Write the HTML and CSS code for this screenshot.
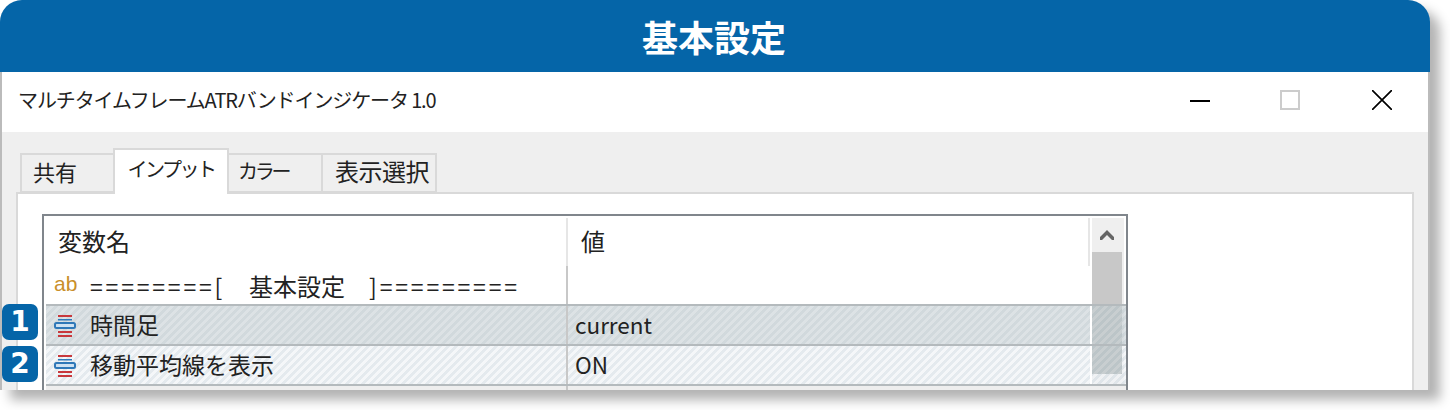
FILE: index.html
```html
<!DOCTYPE html>
<html lang="ja">
<head>
<meta charset="utf-8">
<title>基本設定</title>
<link rel="stylesheet" href="styles.css">
</head>
<body>
<div class="card">
  <header class="banner">基本設定</header>
  <div class="titlebar">
    <span class="wintitle">マルチタイムフレームATRバンドインジケータ 1.0</span>
    <div class="winbtns">
      <svg class="winbtn minbtn" viewBox="0 0 20 20"><path d="M0 11h20" stroke="#000" stroke-width="2" fill="none"/></svg>
      <svg class="winbtn" viewBox="0 0 20 20"><rect x="1" y="1" width="18" height="18" stroke="#ccc" stroke-width="2" fill="none"/></svg>
      <svg class="winbtn" viewBox="0 0 20 20"><path d="M0 0L20 20M20 0L0 20" stroke="#000" stroke-width="1.7" fill="none"/></svg>
    </div>
  </div>
  <div class="body">
    <div class="tabs">
      <div class="tab t1">共有</div>
      <div class="tab active">インプット</div>
      <div class="tab t3">カラー</div>
      <div class="tab t4">表示選択</div>
    </div>
    <div class="panel">
      <div class="table">
        <div class="row head"><div class="c1">変数名</div><div class="c2">値</div></div>
        <div class="row plain"><div class="c1"><span class="ab">ab</span><span class="eq">========[<span class="jp">　基本設定　</span>]=========</span></div><div class="c2"></div></div>
        <div class="row sel dark"><div class="c1"><svg class="ic" viewBox="0 0 22 24"><use href="#enumic"/></svg>時間足</div><div class="c2">current</div></div>
        <div class="row sel light"><div class="c1"><svg class="ic" viewBox="0 0 22 24"><use href="#enumic"/></svg>移動平均線を表示</div><div class="c2">ON</div></div>
        <div class="row rest"><div class="c1"></div><div class="c2"></div></div>
        <div class="scroll"><div class="up"><svg viewBox="0 0 14 12" class="arrow"><path d="M0 8V11H2L7 6L12 11H14V8L7 1Z" fill="#666"/></svg></div><div class="thumb"></div></div>
      </div>
    </div>
  </div>
  <span class="badge b1">1</span>
  <span class="badge b2">2</span>
</div>
<svg class="defs" width="0" height="0"><defs><g id="enumic">
  <path d="M4 1h14v2H4zM4 21h14v2H4z" fill="#c8383c"/>
  <path d="M4 5h14v1.5H4z" fill="#2f78b8"/>
  <path d="M4 17h14v2H4z" fill="#c8383c"/>
  <rect x="1" y="9" width="20" height="5" rx="1.5" fill="#cfe2f2" stroke="#2f78b8" stroke-width="2"/>
</g></defs></svg>
</body>
</html>
```
FILE: styles.css
```css
* { box-sizing: border-box; }
html, body { margin: 0; padding: 0; width: 1450px; height: 410px; overflow: hidden; background: #fff; }
body { font-family: "Noto Sans CJK JP", "Noto Sans", sans-serif; color: #222; }
.card { position: relative; width: 1430px; height: 390px; border-radius: 22px 22px 0 0; box-shadow: 10px 10px 12px rgba(0,0,0,.3); background: #efefef; overflow: hidden; display: flex; flex-direction: column; }
.banner { height: 72px; background: #0565a8; color: #fff; font-size: 36px; font-weight: 700; line-height: 73px; text-align: center; flex: none; letter-spacing: 0; padding-right: 2px; }
.titlebar { height: 60px; flex: none; background: #fff; border-left: 2px solid #bbb; border-right: 2px solid #bbb; display: flex; align-items: center; justify-content: space-between; padding: 0 36px 0 16px; }
.wintitle { font-size: 20px; letter-spacing: -1.12px; color: #222; margin-top: -5px; }
.winbtns { display: flex; gap: 72px; margin-top: -4px; }
.winbtn { width: 20px; height: 20px; display: block; }
.minbtn { margin-right: -2px; }
.body { flex: 1; min-height: 0; border-left: 2px solid #bbb; border-right: 2px solid #bbb; padding: 16px 14px 0; display: flex; flex-direction: column; }
.tabs { display: flex; height: 46px; flex: none; padding-left: 4px; margin-bottom: -2px; position: relative; z-index: 1; }
.tab { height: 40px; margin-top: 5px; border: 2px solid #d9d9d9; border-right-width: 0; background: #efefef; font-size: 22px; line-height: 32px; }
.t1 { width: 93px; padding-left: 11px; }
.active { width: 116px; height: 46px; margin-top: 0; background: #fff; border-width: 2px 2px 0; font-size: 20px; line-height: 38px; letter-spacing: -2.5px; text-align: center; }
.t3 { width: 92px; border-left: 0; font-size: 20px; letter-spacing: -3.2px; padding-left: 9px; }
.t4 { width: 116px; border-right-width: 2px; font-size: 24px; letter-spacing: -.5px; padding-left: 12px; }
.panel { flex: 1; min-height: 0; background: #fff; border: 2px solid #d9d9d9; border-bottom: 0; padding: 20px 0 0 24px; }
.table { position: relative; width: 1086px; height: 200px; border: 2px solid #80868c; border-bottom: 0; padding-left: 2px; font-size: 23px; }
.row { display: flex; position: relative; }
.c1 { width: 522px; flex: none; padding-left: 12px; display: flex; align-items: center; border-right: 2px solid #c8c8c8; white-space: nowrap; }
.c2 { flex: 1; padding-left: 7px; display: flex; align-items: center; font-size: 22.5px; }
.head { height: 50px; padding-top: 2px; }
.head .c1 { border-right-color: #e6e6e6; font-size: 24px; padding-bottom: 4px; }
.head .c2 { padding-left: 13px; font-size: 24px; padding-bottom: 4px; }
.head::after { content: ""; position: absolute; right: 36px; top: 2px; bottom: 0; width: 2px; background: #e6e6e6; }
.plain { height: 38px; }
.plain .c1 { padding-left: 8px; }
.ab { color: #c98f2a; font-family: "Liberation Sans", sans-serif; font-size: 21px; width: 36px; margin-top: -3px; }
.eq { font-size: 23px; letter-spacing: 2.8px; }
.jp { font-size: 24px; letter-spacing: 0; }
.sel { z-index: 2; height: 40px; border-top: 2px solid #b4babd; }
.sel .c2 { padding-bottom: 2px; }
.dark { background: repeating-linear-gradient(135deg, rgba(190,201,206,.7) 0 2.83px, rgba(206,214,218,.7) 2.83px 5.66px); }
.light { background: repeating-linear-gradient(135deg, rgba(217,225,231,.7) 0 2.83px, rgba(240,243,246,.7) 2.83px 5.66px); }
.sel::after { content: ""; position: absolute; right: 34px; top: 0; bottom: 0; width: 2px; background: #fff; }
.sel::before { content: ""; position: absolute; right: 4px; width: 30px; top: 0; background: repeating-linear-gradient(135deg, #bcc5c8 0 2.83px, #c8ced0 2.83px 5.66px); }
.dark::before { bottom: 0; }
.light::before { height: 28px; }
.rest { height: 10px; border-top: 2px solid #b4babd; background: #eee; z-index: 2; }
.sel .c1 { padding-left: 8px; padding-bottom: 2px; }
.ic { width: 22px; height: 24px; margin-right: 14px; flex: none; margin-top: 3px; }
.scroll { position: absolute; top: 2px; right: 2px; width: 32px; height: 168px; background: #efefef; display: flex; flex-direction: column; z-index: 1; }
.up { height: 34px; display: flex; align-items: center; justify-content: center; padding-right: 2px; }
.arrow { width: 14px; height: 12px; }
.thumb { width: 30px; height: 122px; flex: none; background: #c8c8c8; }
.badge { position: absolute; left: 2px; width: 36px; height: 36px; border-radius: 7px; background: #0565a8; color: #fff; font: 700 28px/36px "DejaVu Sans", sans-serif; text-align: center; z-index: 3; }
.b1 { top: 304px; }
.b2 { top: 346px; }
.defs { position: absolute; }
```
